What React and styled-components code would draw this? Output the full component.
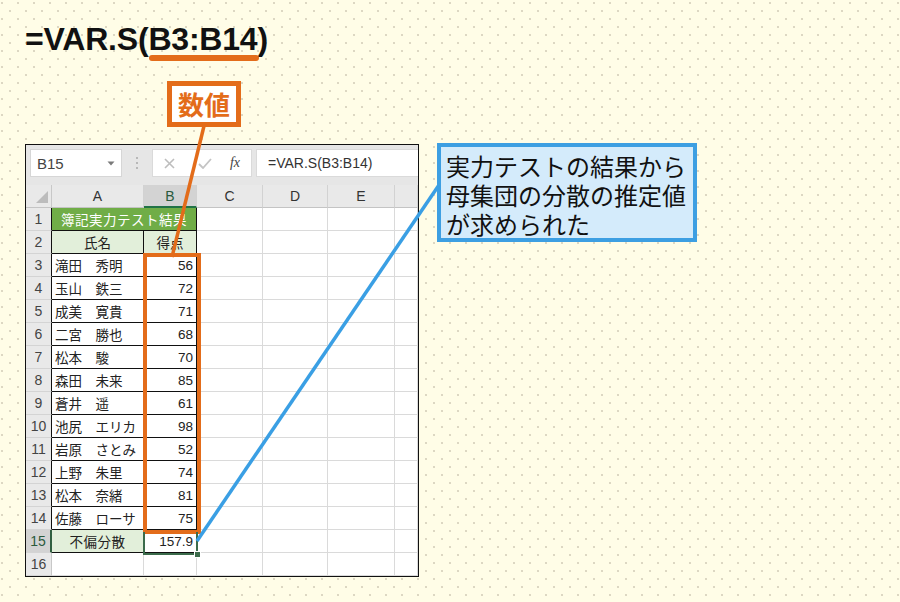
import React from "react";
import styled, { createGlobalStyle } from "styled-components";

const GlobalStyle = createGlobalStyle`
  html, body {
    margin: 0;
    padding: 0;
    background: #fffde7;
  }
`;

const rows = [
    ["滝田　秀明", "56"],
    ["玉山　鉄三", "72"],
    ["成美　寛貴", "71"],
    ["二宮　勝也", "68"],
    ["松本　駿", "70"],
    ["森田　未来", "85"],
    ["蒼井　遥", "61"],
    ["池尻　エリカ", "98"],
    ["岩原　さとみ", "52"],
    ["上野　朱里", "74"],
    ["松本　奈緒", "81"],
    ["佐藤　ローサ", "75"],
];

const columns = ["A", "B", "C", "D", "E", ""];

const EmptyCells = ({ count }) =>
    Array.from({ length: count }).map((_, i) => <Cell key={i} />);

const App = () => {
    return (
        <Page>
            <GlobalStyle />
            <Title>
                =VAR.S(<Ref>B3:B14</Ref>)
            </Title>
            <Label>数値</Label>

            <Row>
                <Sheet>
                    <FormulaBar>
                        <NameBox>
                            B15
                            <svg width="8" height="5" viewBox="0 0 8 5">
                                <path d="M0.5 0.5 L7.5 0.5 L4 4.5 Z" fill="#7a7a7a" />
                            </svg>
                        </NameBox>
                        <Grip>
                            <svg width="4" height="14" viewBox="0 0 4 14">
                                <circle cx="2" cy="2" r="1" fill="#a8a8a8" />
                                <circle cx="2" cy="7" r="1" fill="#a8a8a8" />
                                <circle cx="2" cy="12" r="1" fill="#a8a8a8" />
                            </svg>
                        </Grip>
                        <FxBox>
                            <IconSlot $w={32}>
                                <svg width="11" height="11" viewBox="0 0 11 11">
                                    <path d="M1 1 L10 10 M10 1 L1 10" stroke="#bdbdbd" strokeWidth="1.6" />
                                </svg>
                            </IconSlot>
                            <IconSlot $w={40}>
                                <svg width="14" height="11" viewBox="0 0 14 11">
                                    <path d="M1 6 L5 10 L13 1" stroke="#c4c4c4" strokeWidth="1.8" fill="none" />
                                </svg>
                            </IconSlot>
                            <IconSlot $w={20}>
                                <FxText>fx</FxText>
                            </IconSlot>
                        </FxBox>
                        <FormulaInput>=VAR.S(B3:B14)</FormulaInput>
                    </FormulaBar>

                    <Grid>
                        <Corner>
                            <svg width="14" height="14" viewBox="0 0 14 14">
                                <path d="M13 1 L13 13 L1 13 Z" fill="#bcbcbc" />
                            </svg>
                        </Corner>
                        {columns.map((c) => (
                            <ColHead key={c || "F"} $selected={c === "B"}>
                                {c}
                            </ColHead>
                        ))}

                        <RowHead $table>1</RowHead>
                        <Cell $span={2} $table $align="center" $bg="#70ad47" $color="#fff" $spaced>
                            簿記実力テスト結果
                        </Cell>
                        <EmptyCells count={4} />

                        <RowHead $table>2</RowHead>
                        <Cell $table $align="center" $bg="#e2efda">氏名</Cell>
                        <Cell $table $align="center" $bg="#e2efda">得点</Cell>
                        <EmptyCells count={4} />

                        {rows.map(([name, score], i) => (
                            <React.Fragment key={i}>
                                <RowHead $table>{i + 3}</RowHead>
                                <Cell $table>{name}</Cell>
                                <Cell $table $align="right">{score}</Cell>
                                <EmptyCells count={4} />
                            </React.Fragment>
                        ))}

                        <RowHead $table $selected>15</RowHead>
                        <Cell $table $align="center" $bg="#e2efda" $spaced>不偏分散</Cell>
                        <Cell $table $align="right">157.9</Cell>
                        <EmptyCells count={4} />

                        <RowHead>16</RowHead>
                        <EmptyCells count={6} />
                    </Grid>

                    <RangeFrame />
                    <Selection>
                        <FillHandle />
                    </Selection>
                </Sheet>

                <Callout>
                    <CalloutLine>実力テストの結果から</CalloutLine>
                    <CalloutLine>母集団の分散の推定値</CalloutLine>
                    <CalloutLine>が求められた</CalloutLine>
                </Callout>
            </Row>

            <Leaders width="900" height="602" viewBox="0 0 900 602">
                <line x1="204" y1="126" x2="172" y2="257" stroke="#e36c1a" strokeWidth="3.5" />
                <line x1="439" y1="185" x2="197" y2="541" stroke="#3a9fe4" strokeWidth="3.5" />
            </Leaders>
        </Page>
    );
};

export default App;

const Page = styled.div`
    position: relative;
    width: 900px;
    height: 602px;
    overflow: hidden;
    display: flex;
    flex-direction: column;
    align-items: flex-start;
    background-color: #fffde7;
    background-image: radial-gradient(circle, #dcd7c2 0.7px, transparent 1.3px),
        radial-gradient(circle, #dcd7c2 0.7px, transparent 1.3px);
    background-size: 16px 16px;
    background-position: 2px 3px, 10px 11px;
    font-family: "Liberation Sans", "Noto Sans CJK JP", sans-serif;
`;

const Title = styled.h1`
    margin: 21px 0 0 25px;
    font-family: "Liberation Sans", sans-serif;
    font-size: 32px;
    font-weight: bold;
    line-height: 36px;
    letter-spacing: -0.2px;
    color: #111;
`;

const Ref = styled.span`
    position: relative;

    &::after {
        content: "";
        position: absolute;
        left: 1px;
        right: -2px;
        bottom: -4px;
        height: 6px;
        border-radius: 3px;
        background: #e36c1a;
    }
`;

const Label = styled.div`
    margin: 24px 0 0 167px;
    width: 74px;
    height: 46px;
    box-sizing: border-box;
    border: 5px solid #e36c1a;
    background: #fff;
    display: flex;
    align-items: center;
    justify-content: center;
    font-family: "Noto Sans CJK JP", sans-serif;
    font-size: 26px;
    font-weight: bold;
    line-height: 1;
    color: #e36c1a;
`;

const Row = styled.div`
    margin-top: 17px;
    padding-left: 25px;
    display: flex;
    align-items: flex-start;
    gap: 18px;
`;

const Sheet = styled.div`
    position: relative;
    width: 394px;
    height: 433px;
    box-sizing: border-box;
    border: 1px solid #111;
    background: #fff;
    overflow: hidden;
`;

const FormulaBar = styled.div`
    height: 40px;
    box-sizing: border-box;
    padding: 4px 0 0 4px;
    background: #e6e6e6;
    display: flex;
    align-items: flex-start;
`;

const NameBox = styled.div`
    width: 92px;
    height: 28px;
    box-sizing: border-box;
    border: 1px solid #d6d6d6;
    background: #fff;
    padding: 0 6px 0 6px;
    display: flex;
    align-items: center;
    justify-content: space-between;
    font-size: 15px;
    color: #444;
`;

const Grip = styled.div`
    width: 30px;
    height: 28px;
    display: flex;
    align-items: center;
    justify-content: center;
`;

const FxBox = styled.div`
    width: 100px;
    height: 28px;
    box-sizing: border-box;
    border: 1px solid #dadada;
    background: #fff;
    display: flex;
    align-items: center;
`;

const IconSlot = styled.div`
    width: ${(p) => p.$w}px;
    display: flex;
    justify-content: center;
    align-items: center;
`;

const FxText = styled.span`
    font-family: "Liberation Serif", serif;
    font-style: italic;
    font-size: 14px;
    color: #444;
`;

const FormulaInput = styled.div`
    flex: 1;
    margin-left: 4px;
    height: 28px;
    box-sizing: border-box;
    border: 1px solid #dadada;
    border-right: none;
    background: #fff;
    padding-left: 11px;
    display: flex;
    align-items: center;
    font-size: 14px;
    color: #333;
    white-space: nowrap;
`;

const Grid = styled.div`
    display: grid;
    grid-template-columns: 26px 92px 53px 66px 65px 67px 1fr;
    grid-template-rows: repeat(17, 23px);
`;

const Corner = styled.div`
    box-sizing: border-box;
    background: #e9e9e9;
    border-right: 1px solid #c8c8c8;
    border-bottom: 1px solid #c4c4c4;
    display: flex;
    align-items: flex-end;
    justify-content: flex-end;
    padding: 0 2px 3px 0;
`;

const ColHead = styled.div`
    box-sizing: border-box;
    background: ${(p) => (p.$selected ? "#d3d3d3" : "#e9e9e9")};
    border-right: 1px solid #d2d2d2;
    border-bottom: ${(p) => (p.$selected ? "2px solid #217346" : "1px solid #c4c4c4")};
    display: flex;
    align-items: center;
    justify-content: center;
    font-size: 14px;
    color: ${(p) => (p.$selected ? "#2a5a3c" : "#333")};
`;

const RowHead = styled.div`
    box-sizing: border-box;
    background: ${(p) => (p.$selected ? "#d3d3d3" : "#e9e9e9")};
    border-right: ${(p) =>
        p.$selected ? "2px solid #2f5f3f" : p.$table ? "1px solid #111" : "1px solid #c8c8c8"};
    border-bottom: 1px solid #d4d4d4;
    display: flex;
    align-items: center;
    justify-content: center;
    font-size: 14px;
    color: ${(p) => (p.$selected ? "#2a5a3c" : "#444")};
`;

const Cell = styled.div`
    box-sizing: border-box;
    grid-column: ${(p) => (p.$span ? `span ${p.$span}` : "auto")};
    background: ${(p) => p.$bg || "#fff"};
    border-right: 1px solid ${(p) => (p.$table ? "#111" : "#dadada")};
    border-bottom: 1px solid ${(p) => (p.$table ? "#111" : "#dadada")};
    padding: 0 3px;
    display: flex;
    align-items: center;
    justify-content: ${(p) =>
        p.$align === "right" ? "flex-end" : p.$align === "center" ? "center" : "flex-start"};
    font-size: 13.5px;
    letter-spacing: ${(p) => (p.$spaced ? "0.5px" : "0")};
    color: ${(p) => p.$color || "#222"};
    white-space: nowrap;
    overflow: hidden;
`;

const RangeFrame = styled.div`
    position: absolute;
    left: 117px;
    top: 108px;
    width: 58px;
    height: 281px;
    box-sizing: border-box;
    border: 4px solid #e36c1a;
    pointer-events: none;
`;

const Selection = styled.div`
    position: absolute;
    left: 117px;
    top: 387px;
    width: 55px;
    height: 23px;
    box-sizing: border-box;
    border: 2px solid #3b6b4b;
    border-top: none;
    pointer-events: none;
`;

const FillHandle = styled.div`
    position: absolute;
    right: -5px;
    bottom: -5px;
    width: 7px;
    height: 7px;
    box-sizing: border-box;
    background: #3b6b4b;
    border: 1px solid #fff;
`;

const Callout = styled.div`
    margin-top: -1px;
    width: 260px;
    height: 99px;
    box-sizing: border-box;
    border: 4px solid #3d9fe2;
    background: #d4ebfb;
    padding: 4px 0 0 5px;
    font-family: "Noto Sans CJK JP", sans-serif;
    font-size: 24px;
    font-weight: 400;
    color: #111;
    white-space: nowrap;
`;

const CalloutLine = styled.div`
    height: 29px;
    line-height: 29px;
`;

const Leaders = styled.svg`
    position: absolute;
    left: 0;
    top: 0;
    pointer-events: none;
`;
